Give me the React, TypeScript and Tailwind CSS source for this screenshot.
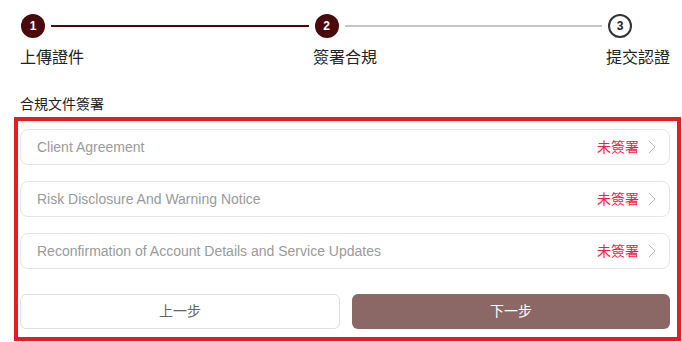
import { ChevronRight } from "lucide-react";

const DOCS = [
  "Client Agreement",
  "Risk Disclosure And Warning Notice",
  "Reconfirmation of Account Details and Service Updates",
];

export default function App() {
  return (
    <div
      className="w-[682px] h-[342px] bg-white overflow-hidden"
      style={{ fontFamily: '"Liberation Sans", Arial, "Noto Sans CJK TC", sans-serif' }}
    >
      {/* Stepper */}
      <div className="pt-[14px] pl-[21px]">
        <div className="flex items-center w-[611px]">
          <div className="w-6 h-6 rounded-full bg-[#4a0a0c] text-white text-[12px] font-bold flex items-center justify-center">
            1
          </div>
          <div className="flex-1 h-[2px] bg-[#4a0a0c] mx-1.5" />
          <div className="w-6 h-6 rounded-full bg-[#4a0a0c] text-white text-[12px] font-bold flex items-center justify-center">
            2
          </div>
          <div className="flex-1 h-[2px] bg-[#c4c4cc] mx-1.5" />
          <div className="w-6 h-6 rounded-full border-2 border-[#333] bg-white text-[#222] text-[12px] font-bold flex items-center justify-center">
            3
          </div>
        </div>
      </div>
      <div className="flex pl-5 mt-[9px] text-[16px] leading-[22px] text-[#222]">
        <span className="w-[293px]">上傳證件</span>
        <span className="w-[293px]">簽署合規</span>
        <span>提交認證</span>
      </div>

      {/* Section */}
      <p className="pl-5 mt-[25px] text-[14px] leading-5 text-[#222]">合規文件簽署</p>

      <div className="ml-[14px] mt-[3px] w-[667px] border-4 border-[#e41e1e] pl-[2px] pr-[7px] pt-2 pb-2">
        <div className="flex flex-col gap-4">
          {DOCS.map((d) => (
            <div
              key={d}
              className="h-9 flex items-center justify-between border border-[#e3e5ea] rounded-lg pl-4 pr-[5px]"
            >
              <span className="text-[14px] text-[#9a9a9a]">{d}</span>
              <span className="flex items-center gap-[1px]">
                <span className="text-[14px] text-[#f2223f]">未簽署</span>
                <ChevronRight size={24} strokeWidth={1} className="text-[#b8b8b8]" />
              </span>
            </div>
          ))}
        </div>

        <div className="flex gap-3 mt-[25px]">
          <button className="flex-1 h-[35px] rounded-md border border-[#dedee4] bg-white text-[14px] text-[#666]">
            上一步
          </button>
          <button className="flex-1 h-[35px] rounded-md bg-[#8b6866] text-[14px] text-white">
            下一步
          </button>
        </div>
      </div>
    </div>
  );
}
